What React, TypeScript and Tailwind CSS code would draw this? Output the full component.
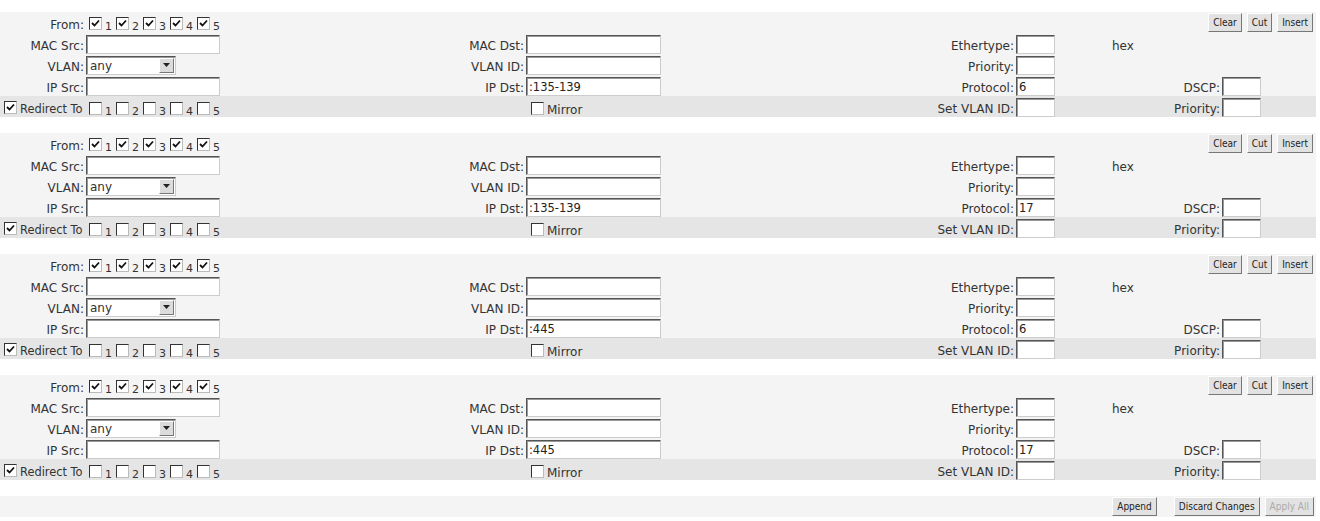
import React from "react";

type Rule = { ipDst: string; protocol: string };

const rules: Rule[] = [
  { ipDst: ":135-139", protocol: "6" },
  { ipDst: ":135-139", protocol: "17" },
  { ipDst: ":445", protocol: "6" },
  { ipDst: ":445", protocol: "17" },
];

const font = { fontFamily: '"DejaVu Sans", Verdana, sans-serif' };

const Box = ({ checked }: { checked?: boolean }) => (
  <span className="inline-flex h-[13px] w-[13px] shrink-0 items-center justify-center border border-t-[#333] border-l-[#333] border-r-[#bbb] border-b-[#bbb] bg-white">
    {checked && (
      <svg width="9" height="9" viewBox="0 0 9 9">
        <path d="M1 4 L3.5 6.5 L8 1.5" stroke="#111" strokeWidth="1.8" fill="none" />
      </svg>
    )}
  </span>
);

const Ports = ({ checked }: { checked?: boolean }) => (
  <div className="flex items-center">
    {[1, 2, 3, 4, 5].map((n) => (
      <span key={n} className="mr-[4px] flex items-center">
        <Box checked={checked} />
        <span className="ml-[3px] mt-[6px] text-[11px] leading-none">{n}</span>
      </span>
    ))}
  </div>
);

const Input = ({ w, value = "" }: { w: string; value?: string }) => (
  <input
    readOnly
    value={value}
    className={`${w} mt-[1px] block h-[19px] border border-t-[#555] border-l-[#555] border-r-[#ccc] border-b-[#ccc] bg-white px-[2px] pt-[1px] text-[11.5px] leading-none text-[#222] shadow-[inset_1px_1px_0_#999] outline-none`}
    style={font}
  />
);

const Select = () => (
  <div className="mt-[1px] flex h-[19px] w-[90px] items-center border border-t-[#555] border-l-[#555] border-r-[#ccc] border-b-[#ccc] bg-white shadow-[inset_1px_1px_0_#999]">
    <span className="flex-1 pl-[3px] pt-[1px] text-[12px]">any</span>
    <span className="mr-[1px] flex h-[15px] w-[15px] items-center justify-center border border-t-[#fff] border-l-[#fff] border-r-[#777] border-b-[#777] bg-[#dcdcdc]">
      <svg width="7" height="4" viewBox="0 0 7 4">
        <path d="M0 0 H7 L3.5 4 Z" fill="#222" />
      </svg>
    </span>
  </div>
);

const Button = ({ children, disabled }: { children: React.ReactNode; disabled?: boolean }) => (
  <button
    className={`h-[19px] border border-t-[#fff] border-l-[#fff] border-r-[#777] border-b-[#777] bg-[#e2e2e2] px-[4px] text-[10px] leading-none ${
      disabled ? "text-[#aaa]" : "text-[#222]"
    }`}
    style={{ fontFamily: '"DejaVu Sans Condensed", "DejaVu Sans", Tahoma, sans-serif' }}
  >
    {children}
  </button>
);

const Label = ({ children }: { children: React.ReactNode }) => (
  <div className="translate-y-[2px] pr-[2px] text-right whitespace-nowrap">{children}</div>
);

const cols = "grid grid-cols-[86px_354px_86px_374px_116px_84px_122px_94px] items-center";

const RuleBlock = ({ rule }: { rule: Rule }) => (
  <div className="mb-[16px] bg-[#f4f4f4]">
    <div className={`${cols} h-[21px]`}>
      <Label>From:</Label>
      <div className="pl-[3px] translate-y-[1px]">
        <Ports checked />
      </div>
      <div className="col-span-6 flex justify-end gap-[5px] pr-[3px]">
        <Button>Clear</Button>
        <Button>Cut</Button>
        <Button>Insert</Button>
      </div>
    </div>
    <div className={`${cols} h-[21px]`}>
      <Label>MAC Src:</Label>
      <div>
        <Input w="w-[134px]" />
      </div>
      <Label>MAC Dst:</Label>
      <div>
        <Input w="w-[135px]" />
      </div>
      <Label>Ethertype:</Label>
      <div>
        <Input w="w-[39px]" />
      </div>
      <div className="translate-y-[2px] pl-[12px]">hex</div>
      <div />
    </div>
    <div className={`${cols} h-[21px]`}>
      <Label>VLAN:</Label>
      <div>
        <Select />
      </div>
      <Label>VLAN ID:</Label>
      <div>
        <Input w="w-[135px]" />
      </div>
      <Label>Priority:</Label>
      <div>
        <Input w="w-[39px]" />
      </div>
      <div />
      <div />
    </div>
    <div className={`${cols} h-[21px]`}>
      <Label>IP Src:</Label>
      <div>
        <Input w="w-[134px]" />
      </div>
      <Label>IP Dst:</Label>
      <div>
        <Input w="w-[135px]" value={rule.ipDst} />
      </div>
      <Label>Protocol:</Label>
      <div>
        <Input w="w-[39px]" value={rule.protocol} />
      </div>
      <Label>DSCP:</Label>
      <div>
        <Input w="w-[39px]" />
      </div>
    </div>
    <div className={`${cols} h-[21px] bg-[#e5e5e5]`}>
      <div className="flex items-center pl-[4px] translate-y-[1px]">
        <Box checked />
        <span className="ml-[3px] mt-[3px] whitespace-nowrap text-[11.4px]">Redirect To</span>
      </div>
      <div className="pl-[3px] translate-y-[1px]">
        <Ports />
      </div>
      <div />
      <div className="flex items-center pl-[5px] translate-y-[1px]">
        <Box />
        <span className="ml-[3px] mt-[4px]">Mirror</span>
      </div>
      <Label>Set VLAN ID:</Label>
      <div>
        <Input w="w-[39px]" />
      </div>
      <Label>Priority:</Label>
      <div>
        <Input w="w-[39px]" />
      </div>
    </div>
  </div>
);

export default function App() {
  return (
    <div className="min-h-[521px] w-[1320px] bg-white pt-[12px] text-[12px] text-[#333]" style={font}>
      <div className="w-[1316px]">
        {rules.map((r, i) => (
          <RuleBlock key={i} rule={r} />
        ))}
        <div className="flex h-[21px] items-center justify-end gap-[5px] bg-[#f4f4f4] pr-[2px]">
          <Button>Append</Button>
          <span className="w-[7px]" />
          <Button>Discard Changes</Button>
          <Button disabled>Apply All</Button>
        </div>
      </div>
    </div>
  );
}
